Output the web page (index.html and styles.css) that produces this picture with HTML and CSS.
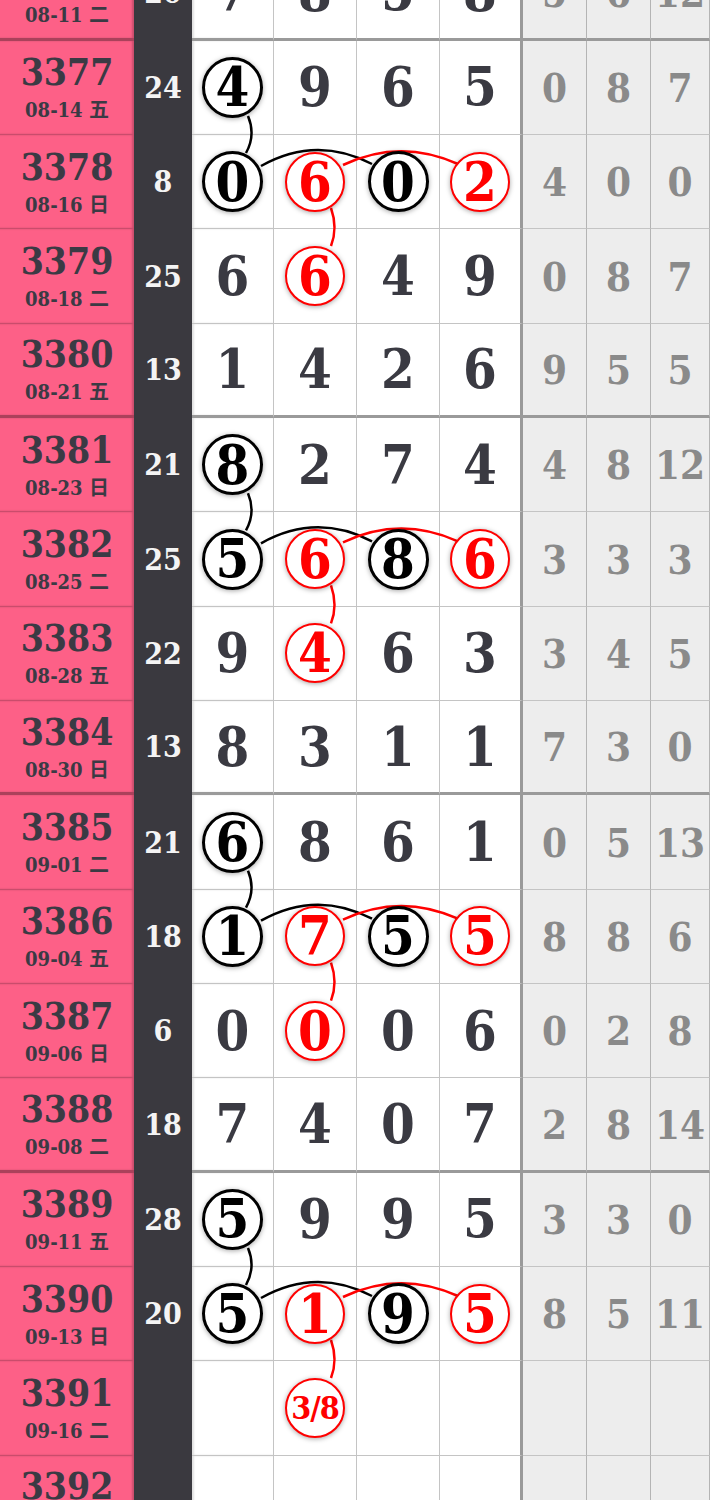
FILE: index.html
```html
<!DOCTYPE html>
<html lang="zh">
<head>
    <meta charset="UTF-8">
    <meta name="viewport" content="width=device-width, initial-scale=1.0">
    <title>走势图</title>
    <link rel="stylesheet" href="styles.css">
</head>
<body>
    <div class="chart">
        <!-- connector lines between marked balls, one group per 4 issues -->
        <svg class="links" width="710" height="1510" viewBox="0 0 710 1510">
            <defs>
                <g id="grp">
                    <path d="M248,75 Q256,94 246,112" stroke="#000"/>
                    <path d="M261,125 Q316,94 372,123" stroke="#000"/>
                    <path d="M343,124 Q400,97 458,123" stroke="#f00"/>
                    <path d="M331,167 Q338,187 331,205" stroke="#f00"/>
                </g>
            </defs>
            <use href="#grp"/>
            <use href="#grp" transform="translate(0,377.33)"/>
            <use href="#grp" transform="translate(0,754.67)"/>
            <use href="#grp" transform="translate(0,1132)"/>
        </svg>

        <div class="row end">
            <div class="issue"><b>3376</b><span>08-11 二</span></div>
            <div class="sum">20</div>
            <div class="num">7</div><div class="num">8</div><div class="num">5</div><div class="num last">8</div>
            <div class="miss">5</div><div class="miss">6</div><div class="miss">12</div>
        </div>

        <div class="row">
            <div class="issue"><b>3377</b><span>08-14 五</span></div>
            <div class="sum">24</div>
            <div class="num"><span class="ball">4</span></div><div class="num">9</div><div class="num">6</div><div class="num last">5</div>
            <div class="miss">0</div><div class="miss">8</div><div class="miss">7</div>
        </div>
        <div class="row">
            <div class="issue"><b>3378</b><span>08-16 日</span></div>
            <div class="sum">8</div>
            <div class="num"><span class="ball">0</span></div><div class="num"><span class="ball red">6</span></div><div class="num"><span class="ball">0</span></div><div class="num last"><span class="ball red">2</span></div>
            <div class="miss">4</div><div class="miss">0</div><div class="miss">0</div>
        </div>
        <div class="row">
            <div class="issue"><b>3379</b><span>08-18 二</span></div>
            <div class="sum">25</div>
            <div class="num">6</div><div class="num"><span class="ball red">6</span></div><div class="num">4</div><div class="num last">9</div>
            <div class="miss">0</div><div class="miss">8</div><div class="miss">7</div>
        </div>
        <div class="row end">
            <div class="issue"><b>3380</b><span>08-21 五</span></div>
            <div class="sum">13</div>
            <div class="num">1</div><div class="num">4</div><div class="num">2</div><div class="num last">6</div>
            <div class="miss">9</div><div class="miss">5</div><div class="miss">5</div>
        </div>

        <div class="row">
            <div class="issue"><b>3381</b><span>08-23 日</span></div>
            <div class="sum">21</div>
            <div class="num"><span class="ball">8</span></div><div class="num">2</div><div class="num">7</div><div class="num last">4</div>
            <div class="miss">4</div><div class="miss">8</div><div class="miss">12</div>
        </div>
        <div class="row">
            <div class="issue"><b>3382</b><span>08-25 二</span></div>
            <div class="sum">25</div>
            <div class="num"><span class="ball">5</span></div><div class="num"><span class="ball red">6</span></div><div class="num"><span class="ball">8</span></div><div class="num last"><span class="ball red">6</span></div>
            <div class="miss">3</div><div class="miss">3</div><div class="miss">3</div>
        </div>
        <div class="row">
            <div class="issue"><b>3383</b><span>08-28 五</span></div>
            <div class="sum">22</div>
            <div class="num">9</div><div class="num"><span class="ball red">4</span></div><div class="num">6</div><div class="num last">3</div>
            <div class="miss">3</div><div class="miss">4</div><div class="miss">5</div>
        </div>
        <div class="row end">
            <div class="issue"><b>3384</b><span>08-30 日</span></div>
            <div class="sum">13</div>
            <div class="num">8</div><div class="num">3</div><div class="num">1</div><div class="num last">1</div>
            <div class="miss">7</div><div class="miss">3</div><div class="miss">0</div>
        </div>

        <div class="row">
            <div class="issue"><b>3385</b><span>09-01 二</span></div>
            <div class="sum">21</div>
            <div class="num"><span class="ball">6</span></div><div class="num">8</div><div class="num">6</div><div class="num last">1</div>
            <div class="miss">0</div><div class="miss">5</div><div class="miss">13</div>
        </div>
        <div class="row">
            <div class="issue"><b>3386</b><span>09-04 五</span></div>
            <div class="sum">18</div>
            <div class="num"><span class="ball">1</span></div><div class="num"><span class="ball red">7</span></div><div class="num"><span class="ball">5</span></div><div class="num last"><span class="ball red">5</span></div>
            <div class="miss">8</div><div class="miss">8</div><div class="miss">6</div>
        </div>
        <div class="row">
            <div class="issue"><b>3387</b><span>09-06 日</span></div>
            <div class="sum">6</div>
            <div class="num">0</div><div class="num"><span class="ball red">0</span></div><div class="num">0</div><div class="num last">6</div>
            <div class="miss">0</div><div class="miss">2</div><div class="miss">8</div>
        </div>
        <div class="row end">
            <div class="issue"><b>3388</b><span>09-08 二</span></div>
            <div class="sum">18</div>
            <div class="num">7</div><div class="num">4</div><div class="num">0</div><div class="num last">7</div>
            <div class="miss">2</div><div class="miss">8</div><div class="miss">14</div>
        </div>

        <div class="row">
            <div class="issue"><b>3389</b><span>09-11 五</span></div>
            <div class="sum">28</div>
            <div class="num"><span class="ball">5</span></div><div class="num">9</div><div class="num">9</div><div class="num last">5</div>
            <div class="miss">3</div><div class="miss">3</div><div class="miss">0</div>
        </div>
        <div class="row">
            <div class="issue"><b>3390</b><span>09-13 日</span></div>
            <div class="sum">20</div>
            <div class="num"><span class="ball">5</span></div><div class="num"><span class="ball red">1</span></div><div class="num"><span class="ball">9</span></div><div class="num last"><span class="ball red">5</span></div>
            <div class="miss">8</div><div class="miss">5</div><div class="miss">11</div>
        </div>
        <div class="row">
            <div class="issue"><b>3391</b><span>09-16 二</span></div>
            <div class="sum"></div>
            <div class="num"></div><div class="num"><span class="ball red small">3/8</span></div><div class="num"></div><div class="num last"></div>
            <div class="miss"></div><div class="miss"></div><div class="miss"></div>
        </div>
        <div class="row end">
            <div class="issue"><b>3392</b><span>09-18 五</span></div>
            <div class="sum"></div>
            <div class="num"></div><div class="num"></div><div class="num"></div><div class="num last"></div>
            <div class="miss"></div><div class="miss"></div><div class="miss"></div>
        </div>
    </div>
</body>
</html>
```

FILE: styles.css
```css
body {
    margin: 0;
    background-color: #ffffff;
    font-family: "DejaVu Serif Condensed", "DejaVu Serif", "Noto Sans CJK SC", serif;
    font-stretch: semi-condensed;
    font-weight: bold;
}

.chart {
    position: relative;
    margin-top: -53.5px;
}

.links {
    position: absolute;
    top: 94.33px;
    left: 0;
    z-index: 1;
    pointer-events: none;
    fill: none;
    stroke-width: 2.5;
}

.row {
    display: grid;
    grid-template-columns: 134px 58px 82px 83px 83px 83px 64px 64px 1fr;
    height: 94.33px;
}

.row > div {
    box-sizing: border-box;
    border-bottom: 1px solid #c4c4c4;
    display: flex;
    align-items: center;
    justify-content: center;
}

.row.end > div {
    border-bottom: 3px solid #9a9a9a;
}

.issue {
    flex-direction: column;
    background-color: #fd6087;
    color: #3b3a44;
    box-shadow: inset -2px 0 2px rgba(0, 0, 0, 0.2);
}

.row > .issue {
    border-bottom-color: rgba(0, 0, 0, 0.2);
}

.row.end > .issue {
    border-bottom-color: rgba(0, 0, 0, 0.32);
}

.issue b {
    font-size: 37px;
    line-height: 40px;
}

.issue span {
    margin-top: 6px;
    font-size: 20px;
    line-height: 24px;
}

.sum {
    background-color: #3a393f;
    color: #f4f4f4;
    font-size: 30px;
}

.row > .sum,
.row.end > .sum {
    border-bottom-color: #3a393f;
}

.num {
    background-color: #ffffff;
    color: #3a3a42;
    font-size: 54px;
    border-right: 1px solid #c4c4c4;
}

.sum + .num {
    box-shadow: inset 2px 0 2px rgba(0, 0, 0, 0.12);
}

.num.last {
    border-right: 3px solid #9a9a9a;
}

.miss {
    background-color: #ededed;
    color: #8a8a8a;
    font-size: 40px;
    border-right: 1px solid #b4b4b4;
}

.ball {
    position: relative;
    z-index: 2;
    width: 55px;
    height: 55px;
    border: 3px solid #000000;
    border-radius: 50%;
    background-color: #ffffff;
    color: #000000;
    display: flex;
    align-items: center;
    justify-content: center;
    line-height: 1;
    box-shadow: 0 1px 5px rgba(0, 0, 0, 0.35);
}

.ball.red {
    width: 56px;
    height: 56px;
    border: 2.5px solid #ff0000;
    color: #ff0000;
}

.ball.small {
    font-size: 32px;
    letter-spacing: -1px;
}
```
